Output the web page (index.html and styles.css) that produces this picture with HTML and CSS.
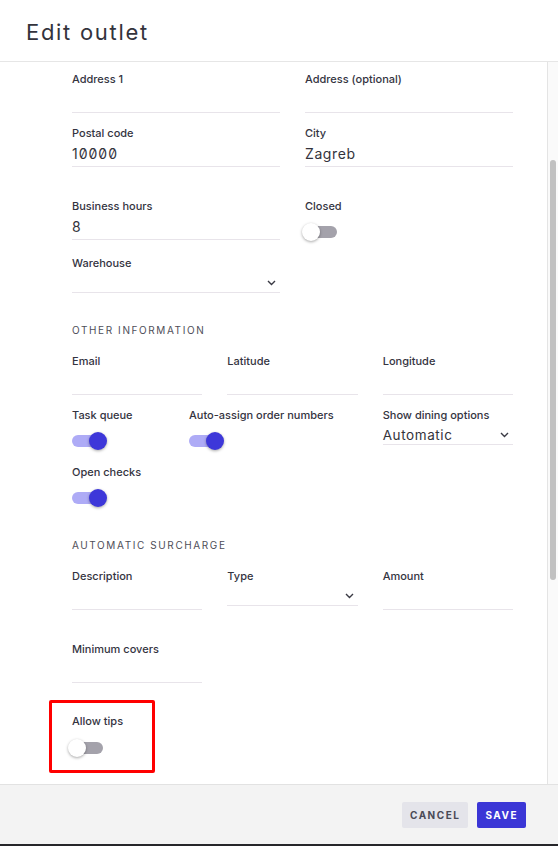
FILE: index.html
```html
<!DOCTYPE html>
<html>
<head>
  <meta charset="UTF-8">
  <title>Edit outlet</title>
  <link rel="stylesheet" href="styles.css">
</head>
<body>
  <div class="dialog">
    <header class="dialog-header">
      <h1>Edit outlet</h1>
    </header>

    <div class="dialog-body">
      <div class="form">
        <div class="row cols-2">
          <div class="field">
            <label>Address 1</label>
            <div class="input"></div>
          </div>
          <div class="field">
            <label>Address (optional)</label>
            <div class="input"></div>
          </div>
        </div>

        <div class="row cols-2 gap-s">
          <div class="field">
            <label>Postal code</label>
            <div class="input num">10000</div>
          </div>
          <div class="field">
            <label>City</label>
            <div class="input">Zagreb</div>
          </div>
        </div>

        <div class="row cols-2 gap-l">
          <div class="field">
            <label>Business hours</label>
            <div class="input">8</div>
          </div>
          <div class="field">
            <label>Closed</label>
            <span class="switch"></span>
          </div>
        </div>

        <div class="row cols-2 gap-m">
          <div class="field">
            <label>Warehouse</label>
            <div class="select">
              <span></span>
              <svg class="chevron" width="9" height="6" viewBox="0 0 9 6"><polyline points="1,1 4.5,4.5 8,1" /></svg>
            </div>
          </div>
        </div>

        <h2 class="section-title">Other information</h2>

        <div class="row cols-3">
          <div class="field">
            <label>Email</label>
            <div class="input"></div>
          </div>
          <div class="field">
            <label>Latitude</label>
            <div class="input"></div>
          </div>
          <div class="field">
            <label>Longitude</label>
            <div class="input"></div>
          </div>
        </div>

        <div class="row cols-3 gap-s">
          <div class="toggles">
            <div class="field toggle-field">
              <label>Task queue</label>
              <span class="switch on"></span>
            </div>
            <div class="field">
              <label>Auto-assign order numbers</label>
              <span class="switch on"></span>
            </div>
          </div>
          <div class="field">
            <label>Show dining options</label>
            <div class="select">
              <span>Automatic</span>
              <svg class="chevron" width="9" height="6" viewBox="0 0 9 6"><polyline points="1,1 4.5,4.5 8,1" /></svg>
            </div>
          </div>
        </div>

        <div class="row gap-ms">
          <div class="field">
            <label>Open checks</label>
            <span class="switch on"></span>
          </div>
        </div>

        <h2 class="section-title after-toggle">Automatic surcharge</h2>

        <div class="row cols-3">
          <div class="field">
            <label>Description</label>
            <div class="input"></div>
          </div>
          <div class="field">
            <label>Type</label>
            <div class="select">
              <span></span>
              <svg class="chevron" width="9" height="6" viewBox="0 0 9 6"><polyline points="1,1 4.5,4.5 8,1" /></svg>
            </div>
          </div>
          <div class="field">
            <label>Amount</label>
            <div class="input"></div>
          </div>
        </div>

        <div class="row cols-3 gap-l">
          <div class="field">
            <label>Minimum covers</label>
            <div class="input"></div>
          </div>
        </div>

        <div class="highlight">
          <div class="field">
            <label>Allow tips</label>
            <span class="switch"></span>
          </div>
        </div>
      </div>

      <div class="scrollbar">
        <div class="scrollbar-thumb"></div>
      </div>
    </div>

    <footer class="dialog-footer">
      <button class="btn btn-cancel">Cancel</button>
      <button class="btn btn-save">Save</button>
    </footer>
  </div>
</body>
</html>
```

FILE: styles.css
```css
body {
  margin: 0;
  font-family: Inter, "Noto Sans", sans-serif;
  color: #34343f;
  background-color: #fff;
}

.dialog {
  width: 558px;
  height: 846px;
  display: flex;
  flex-direction: column;
  overflow: hidden;
}

/* Header */
.dialog-header {
  height: 61px;
  flex-shrink: 0;
  display: flex;
  align-items: center;
  padding-left: 26px;
  border-bottom: 1px solid #e6e6e6;
}

.dialog-header h1 {
  margin: 0;
  padding-top: 3px;
  font-size: 22px;
  font-weight: 400;
  letter-spacing: 1.7px;
  color: #33333c;
}

/* Body with scroll rail */
.dialog-body {
  flex: 1;
  display: flex;
  min-height: 0;
}

.form {
  flex: 1;
  padding: 10px 34px 0 72px;
  border-right: 1px solid #e4e4e4;
}

.scrollbar {
  width: 10px;
  background-color: #fafafa;
  display: flex;
  justify-content: center;
}

.scrollbar-thumb {
  width: 6px;
  height: 420px;
  margin-top: 98px;
  border-radius: 3px;
  background-color: #c1c1c1;
}

/* Rows */
.row {
  display: grid;
  column-gap: 25px;
}

.cols-2 {
  grid-template-columns: 1fr 1fr;
}

.cols-3 {
  grid-template-columns: 1fr 1fr 1fr;
}

.cols-3 .toggles {
  grid-column: span 2;
  display: flex;
  gap: 25px;
}

.gap-s { margin-top: 13px; }
.gap-ms { margin-top: 18px; }
.gap-m { margin-top: 16px; }
.gap-l { margin-top: 32px; }

/* Fields */
.field {
  display: flex;
  flex-direction: column;
  align-items: flex-start;
}

.field label {
  font-size: 11px;
  line-height: 14px;
  font-weight: 500;
  color: #34343f;
}

.toggle-field {
  width: 92px;
}

.input,
.select {
  align-self: stretch;
  box-sizing: border-box;
  border-bottom: 1px solid #e8e4ea;
  font-size: 14px;
  color: #33333c;
  letter-spacing: 0.6px;
}

.input {
  height: 27px;
  padding-top: 4px;
  line-height: 20px;
}

.input.num {
  font-feature-settings: "zero" 1;
  letter-spacing: 1px;
}

.select {
  height: 23px;
  display: flex;
  align-items: center;
  justify-content: space-between;
  padding: 3px 4px 0 0;
  font-size: 13.5px;
}

.chevron {
  fill: none;
  stroke: #3a3a44;
  stroke-width: 1.4;
}

.section-title {
  margin: 30px 0 17px;
  font-size: 10px;
  line-height: 14px;
  font-weight: 400;
  letter-spacing: 1.6px;
  text-transform: uppercase;
  color: #4e4e58;
}

.section-title.after-toggle {
  margin-top: 34px;
}

/* Switches */
.switch {
  position: relative;
  display: block;
  width: 32px;
  height: 12px;
  margin: 13px 0 0;
  border-radius: 6px;
  background-color: #a4a2ab;
}

.switch::after {
  content: "";
  position: absolute;
  top: -3px;
  left: -3px;
  width: 18px;
  height: 18px;
  border-radius: 50%;
  background-color: #fff;
  box-shadow: 0 1px 3px rgba(0, 0, 0, 0.35);
}

.switch.on {
  background-color: #aeabf6;
}

.switch.on::after {
  left: 17px;
  background-color: #3d37d9;
}

/* Outlined field */
.highlight {
  width: 80px;
  margin: 17px 0 0 -23px;
  padding: 11px 0 16px 20px;
  border: 3px solid #ff0000;
  border-radius: 2px;
}

.highlight .switch {
  margin-top: 14px;
  margin-left: -1px;
}

/* Footer */
.dialog-footer {
  height: 59px;
  flex-shrink: 0;
  display: flex;
  align-items: center;
  justify-content: flex-end;
  gap: 9px;
  padding-right: 32px;
  background-color: #f3f3f3;
  border-top: 1px solid #e2e2e2;
  border-bottom: 2px solid #26262a;
}

.btn {
  height: 26px;
  padding: 0 8px;
  border: none;
  border-radius: 2px;
  font-family: Inter, "Noto Sans", sans-serif;
  font-size: 10px;
  font-weight: 700;
  letter-spacing: 1.5px;
  text-transform: uppercase;
  cursor: pointer;
}

.btn-cancel {
  background-color: #e4e4ea;
  color: #4a4a56;
}

.btn-save {
  background-color: #3b36d6;
  color: #fff;
}
```
